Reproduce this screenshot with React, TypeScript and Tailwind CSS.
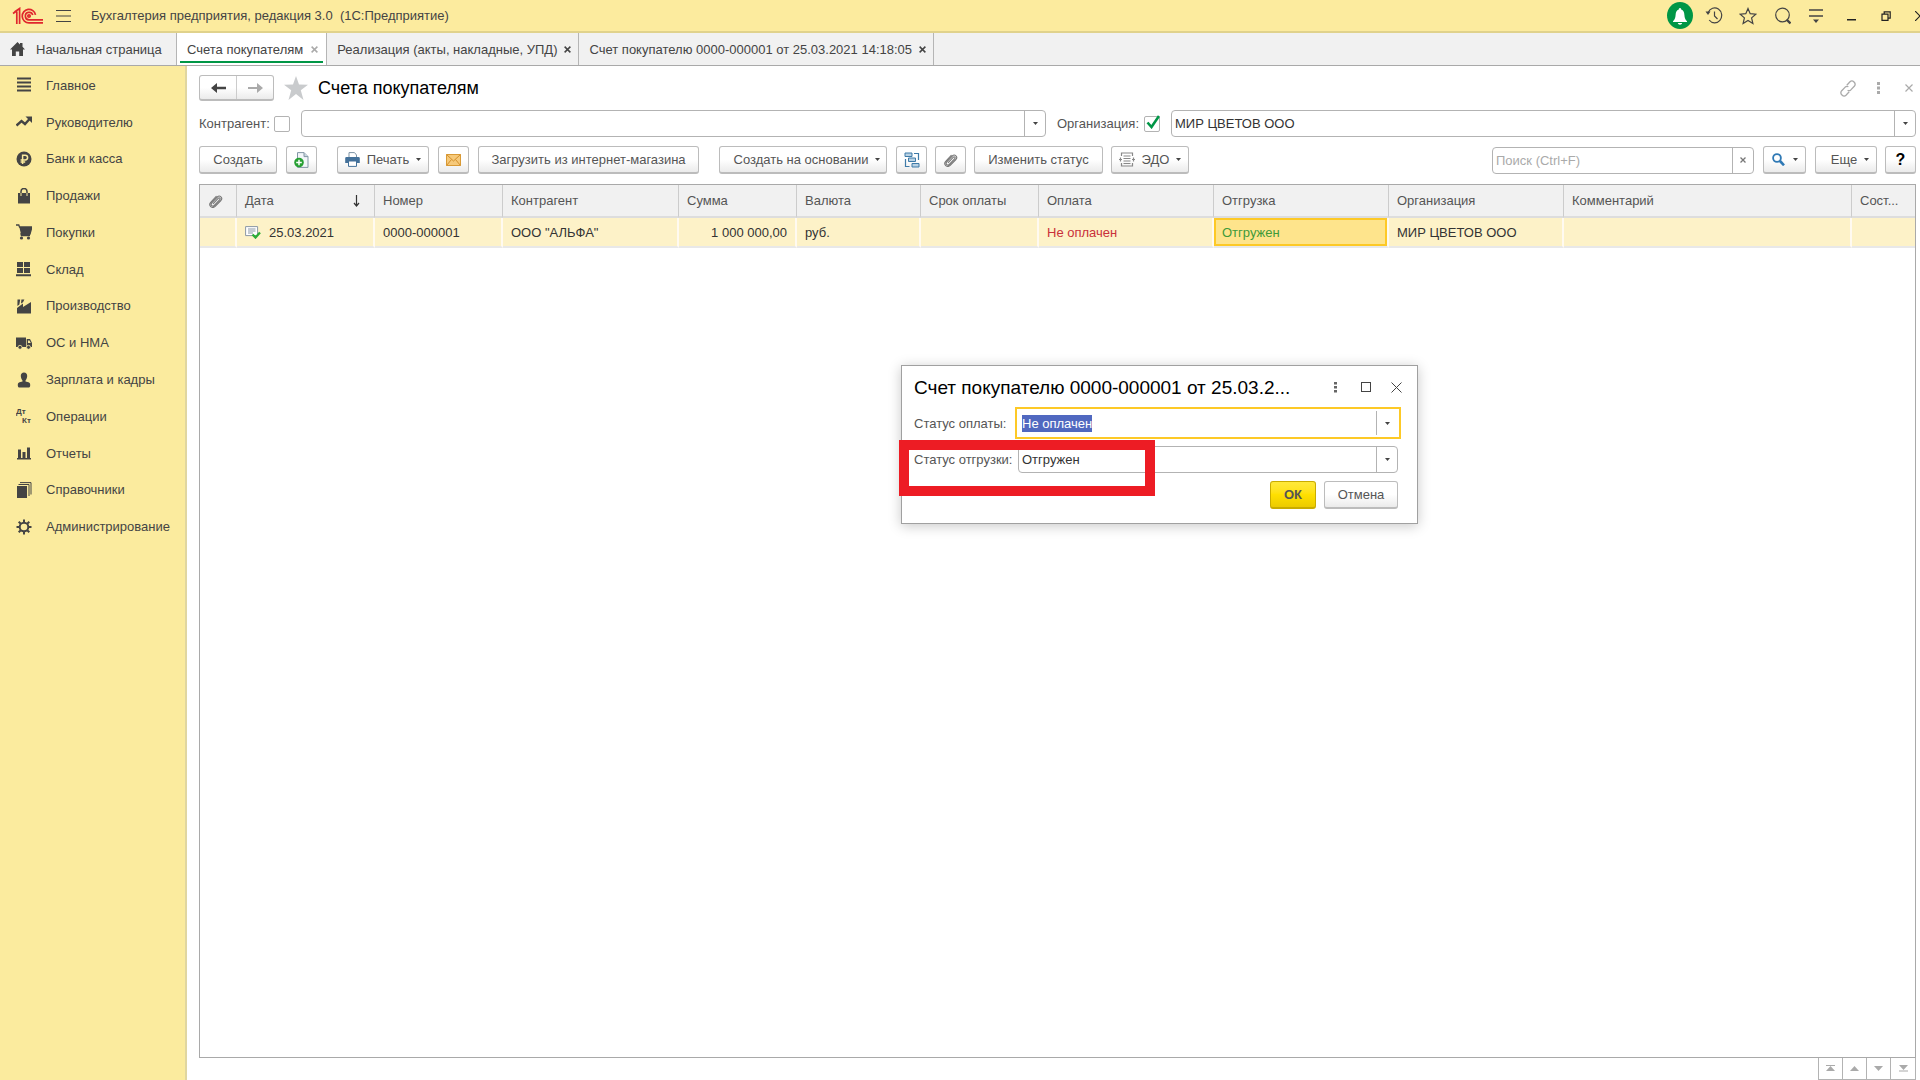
import React from 'react';
import clsx from 'clsx';

const iconClass = 'h-4 w-4 shrink-0';

const sections = [
  {
    label: 'Главное',
    icon: <path d="M1 1.500h14M1 5.500h14M1 9.500h14M1 13.500h14" stroke="currentColor" strokeWidth="2" />,
  },
  {
    label: 'Руководителю',
    icon: (
      <>
        <path d="M0.5 11.5 5.5 7l3.5 3 5-5.5" fill="none" stroke="currentColor" strokeWidth="2.4" />
        <path d="M9.5 2.5H16V9z" fill="currentColor" />
      </>
    ),
  },
  {
    label: 'Банк и касса',
    icon: (
      <>
        <circle cx="8" cy="8" r="7.5" fill="currentColor" />
        <path d="M6.6 13V4.2h2.6a2.3 2.3 0 0 1 0 4.8H4.6M4.6 11h4.6" fill="none" stroke="#fbeb9e" strokeWidth="1.5" />
      </>
    ),
  },
  {
    label: 'Продажи',
    icon: (
      <>
        <path d="M2 5h12v10.5H2z" fill="currentColor" />
        <path d="M5 8V3.500a3 3 0 0 1 6 0V8" fill="none" stroke="currentColor" strokeWidth="1.5" />
        <path d="M5 5v3M11 5v3" stroke="#fbeb9e" strokeWidth="1" />
      </>
    ),
  },
  {
    label: 'Покупки',
    icon: (
      <>
        <path d="M0 1h2.800l.7 2H16l-2 7H5l.4 1.500H14" fill="none" stroke="currentColor" strokeWidth="1.300" />
        <path d="M3.300 3H16l-2 7H5z" fill="currentColor" />
        <circle cx="5.500" cy="14" r="1.600" fill="currentColor" />
        <circle cx="12.500" cy="14" r="1.600" fill="currentColor" />
      </>
    ),
  },
  {
    label: 'Склад',
    icon: <path d="M1 1h6v5H1zM8 1h6v5H8zM1 7h6v5H1zM8 7h6v5H8zM0 13.300h15v2H0z" fill="currentColor" />,
  },
  {
    label: 'Производство',
    icon: <path d="M1 15.500V10l6-4.500V9l8-5v11.500zM1.500 1.500h2.700l-.8 5-2 1.500zM5.400 1.500h3L7 4.200 5 5.500z" fill="currentColor" />,
  },
  {
    label: 'ОС и НМА',
    icon: (
      <>
        <path d="M0 2.500h10v9.500H0zM10.700 4H14l2 4v4h-5.300z" fill="currentColor" />
        <path d="M12 5.500h1.500L14.800 8H12z" fill="#fbeb9e" />
        <circle cx="4" cy="12.300" r="2" fill="currentColor" stroke="#fbeb9e" strokeWidth=".8" />
        <circle cx="12.500" cy="12.300" r="2" fill="currentColor" stroke="#fbeb9e" strokeWidth=".8" />
      </>
    ),
  },
  {
    label: 'Зарплата и кадры',
    icon: <path d="M8 .5c2 0 3.200 1.400 3.200 3.500S9.800 8.300 9.500 8.500v1l3 .8c1.300.4 1.700 1.200 1.700 2.700 0 1.600-.4 2.500-1.200 2.500H3c-.8 0-1.200-.9-1.200-2.500 0-1.500.4-2.300 1.700-2.700l3-.8v-1C6.200 8.300 4.800 6.100 4.800 4S6 .5 8 .5z" fill="currentColor" />,
  },
  {
    label: 'Операции',
    icon: (
      <g fill="currentColor" fontFamily="Liberation Sans" fontWeight="bold" fontSize="8">
        <text x="0" y="6">Дт</text>
        <text x="6" y="15">Кт</text>
      </g>
    ),
  },
  {
    label: 'Отчеты',
    icon: <path d="M1 13h14v1.500H1zM2 4.500h3V13H2zM6.500 7h3v6h-3zM11 2.500h3V13h-3z" fill="currentColor" />,
  },
  {
    label: 'Справочники',
    icon: (
      <>
        <path d="M1 4h10v12H1z" fill="currentColor" />
        <path d="M2.500 2.500H13V14M4 .6h11V12.500" fill="none" stroke="currentColor" strokeWidth="1" />
      </>
    ),
  },
  {
    label: 'Администрирование',
    icon: (
      <>
        <circle cx="8" cy="8" r="4.300" fill="none" stroke="currentColor" strokeWidth="2" />
        <path d="M8 .5v3M8 12.500v3M.5 8h3M12.500 8h3M2.700 2.700l2.100 2.100M11.200 11.200l2.100 2.100M2.700 13.300l2.100-2.100M11.200 4.800l2.100-2.100" stroke="currentColor" strokeWidth="2" />
      </>
    ),
  },
];

const tabs = [
  { label: 'Счета покупателям', active: true },
  { label: 'Реализация (акты, накладные, УПД)', active: false },
  { label: 'Счет покупателю 0000-000001 от 25.03.2021 14:18:05', active: false },
];

const columns = [
  { title: 'Дата', width: 'w-[138px]' },
  { title: 'Номер', width: 'w-32' },
  { title: 'Контрагент', width: 'w-44' },
  { title: 'Сумма', width: 'w-[118px]' },
  { title: 'Валюта', width: 'w-[124px]' },
  { title: 'Срок оплаты', width: 'w-[118px]' },
  { title: 'Оплата', width: 'w-[175px]' },
  { title: 'Отгрузка', width: 'w-[175px]' },
  { title: 'Организация', width: 'w-[175px]' },
  { title: 'Комментарий', width: '' },
  { title: 'Сост...', width: 'w-[63px]' },
];

function Caret() {
  return (
    <svg className="h-[3px] w-[5px] shrink-0" viewBox="0 0 5 3">
      <path d="M0 0h5L2.500 3z" fill="#444" />
    </svg>
  );
}

function Cross({ className }: { className?: string }) {
  return (
    <svg className={clsx('shrink-0', className)} viewBox="0 0 8 8">
      <path d="M.7.7l6.600 6.600M7.300.7.7 7.300" stroke="currentColor" strokeWidth="1.700" />
    </svg>
  );
}

function Clip() {
  return (
    <svg className="h-[14px] w-[14px]" viewBox="0 0 14 14" fill="none" stroke="#777" strokeWidth="1.100">
      <path d="M4 9.800l5.400-5.600c1-1 2.400.3 1.400 1.400L5.300 11.500c-1.700 1.700-4.300-.5-2.500-2.600L8.300 3c2.400-2.500 6 .8 3.600 3.500L6.200 12.300C3 15.300-1 11.500 1.700 8.300L7.500 2" />
    </svg>
  );
}

interface ButtonProps {
  children: React.ReactNode;
  label?: string;
  className?: string;
}

function ToolButton({ children, label, className }: ButtonProps) {
  return (
    <button
      type="button"
      aria-label={label}
      className={clsx(
        'flex h-7 shrink-0 items-center justify-center rounded-[3px] border border-b-2 border-[#bcbcbc] bg-gradient-to-b from-white from-50% to-[#ebebeb] whitespace-nowrap',
        className,
      )}
    >
      {children}
    </button>
  );
}

interface ComboProps {
  id: string;
  value: string;
  className?: string;
}

function Combo({ id, value, className }: ComboProps) {
  return (
    <div className={clsx('flex h-[27px] min-w-0 flex-1 rounded-[4px] border border-[#b3b3b3] bg-white', className)}>
      <input id={id} defaultValue={value} className="min-w-0 flex-1 px-[3px] text-[#333] outline-none" />
      <button type="button" aria-label="Выбрать" className="flex w-[21px] items-center justify-center border-l border-[#b3b3b3]">
        <Caret />
      </button>
    </div>
  );
}

function TitleBar() {
  return (
    <header className="flex h-[33px] shrink-0 items-center overflow-hidden border-b-2 border-[#e0d28c] bg-[#fceb9e]">
      <svg className="ml-3 h-[18px] w-8 shrink-0" viewBox="0 0 32 18" fill="none" stroke="#e0262d" strokeWidth="1.700">
        <path d="M1 6.500l3.500-2.500M4.800 17V4.500M7.600 17V1.500L2.500 5" />
        <path d="M23.500 7.800A6.700 6.700 0 1 0 17 15.800h14M20.800 8A3.800 3.800 0 1 0 17 12.900h14" />
        <circle cx="17" cy="9" r="1.200" />
      </svg>
      <button type="button" aria-label="Меню" className="ml-3">
        <svg className="h-[14px] w-[15px]" viewBox="0 0 15 14" stroke="#444" strokeWidth="1.200">
          <path d="M0 1.500h15M0 7h15M0 12.500h15" />
        </svg>
      </button>
      <h1 className="ml-5 whitespace-pre text-[#444]">Бухгалтерия предприятия, редакция 3.0  (1С:Предприятие)</h1>
      <div className="ml-auto flex shrink-0 items-center text-[#444]">
        <button type="button" aria-label="Оповещения" className="mr-3">
          <svg className="h-[27px] w-[26px]" viewBox="0 0 26 27">
            <ellipse cx="13" cy="13.500" rx="13" ry="13.500" fill="#009646" />
            <path d="M13 6c1 0 1.200.8 1.200 1.500 2.300.7 3 2.800 3.200 5.500.2 3 .8 4.500 2.600 6.200v.8H6v-.8C7.800 17.500 8.400 16 8.600 13c.2-2.700.9-4.800 3.200-5.500C11.800 6.800 12 6 13 6zM10.800 21h4.400c-.4 1.300-1 1.700-2.200 1.700s-1.800-.4-2.200-1.700z" fill="#fff" />
          </svg>
        </button>
        <button type="button" aria-label="История" className="mr-4">
          <svg className="h-[17px] w-[18px]" viewBox="0 0 18 17" fill="none" stroke="currentColor" strokeWidth="1.200">
            <path d="M3.200 5.500a7 7.500 0 1 1 1 7.500M9.500 4.500V9l3 3" />
            <path d="M.5 4.500h5L3 8z" fill="currentColor" stroke="none" />
          </svg>
        </button>
        <button type="button" aria-label="Избранное" className="mr-[18px]">
          <svg className="h-[18px] w-[18px]" viewBox="0 0 18 18" fill="none" stroke="currentColor" strokeWidth="1.200">
            <path d="M9 1.500l2.200 5.200 5.600.5-4.200 3.700 1.300 5.600L9 13.500l-4.900 3 1.300-5.600L1.200 7.200l5.600-.5z" />
          </svg>
        </button>
        <button type="button" aria-label="Поиск" className="mr-[18px]">
          <svg className="h-[18px] w-4" viewBox="0 0 16 18" fill="none" stroke="currentColor">
            <circle cx="7.500" cy="8" r="6.800" strokeWidth="1.200" />
            <path d="M11.500 12.500l4 4" strokeWidth="2.400" />
          </svg>
        </button>
        <button type="button" aria-label="Настройка окна" className="mr-6">
          <svg className="h-[14px] w-[14px]" viewBox="0 0 14 14" fill="none" stroke="currentColor" strokeWidth="1.300">
            <path d="M0 1h14M0 7h14" />
            <path d="M4 10.500h6L7 14z" fill="currentColor" stroke="none" />
          </svg>
        </button>
        <button type="button" aria-label="Свернуть" className="mr-[25px] pt-2">
          <svg className="h-[2px] w-[9px]" viewBox="0 0 9 2">
            <path d="M0 0h9v1.500H0z" fill="#222" />
          </svg>
        </button>
        <button type="button" aria-label="Развернуть" className="mr-6">
          <svg className="h-[10px] w-[10px]" viewBox="0 0 10 10" fill="none" stroke="#222" strokeWidth="1.200">
            <path d="M1 3.200h6V9.400H1zM3.200 3V.8h6v6.400H7.200" />
          </svg>
        </button>
        <button type="button" aria-label="Закрыть" className="-mr-[5px]">
          <svg className="h-[10px] w-[10px]" viewBox="0 0 10 10" stroke="#222" strokeWidth="1.200">
            <path d="M0 0l10 10M10 0 0 10" />
          </svg>
        </button>
      </div>
    </header>
  );
}

function Tabs() {
  return (
    <nav className="flex h-[33px] shrink-0 border-b border-[#a9a9a9] bg-[#f1f1f1] text-[#444]">
      <a href="#home" className="flex w-[177px] items-center border-r border-[#b5b5b5] pl-[10px]">
        <svg className="mr-[11px] h-[14px] w-[15px] shrink-0" viewBox="0 0 15 14">
          <path d="M7.500 0l2.500 2.400V1h2.500v3.800L15 7.500h-2V14H9.200V9.500H5.800V14H2V7.500H0z" fill="#444" />
        </svg>
        Начальная страница
      </a>
      {tabs.map(tab => (
        <div
          key={tab.label}
          className={clsx(
            'relative flex items-center border-r border-[#b5b5b5] pl-[10px]',
            tab.active ? 'gap-2 bg-white pr-2' : 'gap-[7px] pr-[7px]',
          )}
        >
          <a href="#tab" className="whitespace-nowrap">{tab.label}</a>
          <button type="button" aria-label="Закрыть вкладку">
            <Cross className={clsx('h-[7px] w-[7px]', tab.active ? 'text-[#aaa]' : 'text-[#444]')} />
          </button>
          {tab.active && <span className="absolute inset-x-[3px] bottom-[2px] h-[2px] bg-[#009646]" />}
        </div>
      ))}
    </nav>
  );
}

function Sidebar() {
  return (
    <aside className="w-[187px] shrink-0 border-r-2 border-[#e0d6a0] bg-[#fbeb9e]">
      <ul className="mt-px grid h-[478px] auto-rows-fr">
        {sections.map(section => (
          <li key={section.label}>
            <a href="#section" className="flex h-full items-center gap-[14px] pl-4 whitespace-nowrap text-[#444]">
              <svg className={iconClass} viewBox="0 0 16 16">{section.icon}</svg>
              {section.label}
            </a>
          </li>
        ))}
      </ul>
    </aside>
  );
}

function PageHeader() {
  return (
    <div className="flex h-[26px] items-center">
      <div className="flex h-[26px] w-[75px] rounded-[3px] border border-b-2 border-[#bcbcbc] bg-gradient-to-b from-white from-50% to-[#ebebeb]">
        <button type="button" aria-label="Назад" className="flex flex-1 items-center justify-center border-r border-[#ccc]">
          <svg className="h-[10px] w-[15px]" viewBox="0 0 15 10">
            <path d="M0 5l6-5v3.700h9v2.600H6V10z" fill="#444" />
          </svg>
        </button>
        <button type="button" aria-label="Вперед" className="flex flex-1 items-center justify-center">
          <svg className="h-[10px] w-[15px]" viewBox="0 0 15 10">
            <path d="M15 5L9 0v4H0v2h9v4z" fill="#aaa" />
          </svg>
        </button>
      </div>
      <button type="button" aria-label="Добавить в избранное" className="ml-[10px]">
        <svg className="h-6 w-6" viewBox="0 0 24 24">
          <path d="M12 0l3 8.500 9 .2-7.200 5.600L19.500 24 12 18l-7.500 6 2.700-9.700L0 8.700l9-.2z" fill="#c9cbcd" />
        </svg>
      </button>
      <h2 className="ml-[10px] text-lg text-black">Счета покупателям</h2>
      <div className="ml-auto flex items-center pr-[3px] text-[#aaa]">
        <button type="button" aria-label="Ссылка" className="mr-[21px]">
          <svg className="h-[17px] w-4" viewBox="0 0 16 17" fill="none" stroke="currentColor" strokeWidth="1.300">
            <path d="M6.800 5.200l3.200-3.400c2.500-2.500 6.800 1.500 4.300 4.500l-3.500 3.600c-1 .9-2.200 1-3.200.3" />
            <path d="M9.200 11.800L6 15.200c-2.500 2.500-6.800-1.500-4.300-4.500l3.500-3.600c1-.9 2.200-1 3.200-.3" />
          </svg>
        </button>
        <button type="button" aria-label="Действия" className="mr-[25px]">
          <svg className="h-3 w-[3px]" viewBox="0 0 3 12" fill="currentColor">
            <path d="M0 0h3v3H0zM0 4.500h3v3H0zM0 9h3v3H0z" />
          </svg>
        </button>
        <button type="button" aria-label="Закрыть">
          <svg className="h-2 w-2" viewBox="0 0 8 8" stroke="currentColor" strokeWidth="1.200">
            <path d="M.5.5l7 7M7.500.5l-7 7" />
          </svg>
        </button>
      </div>
    </div>
  );
}

function Filters() {
  return (
    <div className="mt-[9px] flex items-center">
      <label htmlFor="partner" className="mr-[7px] w-17 whitespace-nowrap">Контрагент:</label>
      <input type="checkbox" aria-label="Отбор по контрагенту" className="mr-[11px] h-4 w-4 appearance-none rounded-[2px] border border-[#b3b3b3]" />
      <Combo id="partner" value="" />
      <label htmlFor="company" className="mr-[7px] ml-[11px] w-20 whitespace-nowrap">Организация:</label>
      <span className="relative mr-[11px] h-4 w-4">
        <input
          type="checkbox"
          defaultChecked
          aria-label="Отбор по организации"
          className="block h-4 w-4 appearance-none rounded-[2px] border border-[#b3b3b3]"
        />
        <svg className="pointer-events-none absolute top-[-1px] left-[2px] h-[14px] w-[14px]" viewBox="0 0 14 14">
          <path d="M1.500 7.500l4 4.500L13 1" fill="none" stroke="#009646" strokeWidth="2.600" />
        </svg>
      </span>
      <Combo id="company" value="МИР ЦВЕТОВ ООО" />
    </div>
  );
}

function Toolbar() {
  return (
    <div className="mt-[9px] flex items-center">
      <ToolButton className="w-[78px]">Создать</ToolButton>
      <ToolButton label="Создать копированием" className="ml-[9px] w-[31px]">
        <svg className="h-4 w-4" viewBox="0 0 16 16">
          <path d="M3.500.6H10l4 4v10.800H3.500z" fill="#f2f6f9" stroke="#8296a5" />
          <path d="M10 .6v4h4" fill="#c9d5de" stroke="#8296a5" />
          <circle cx="5" cy="10.500" r="4.800" fill="#27a033" />
          <path d="M5 7.700v5.600M2.200 10.500h5.600" stroke="#fff" strokeWidth="1.500" />
        </svg>
      </ToolButton>
      <ToolButton className="ml-5 w-23 gap-[7px]">
        <svg className="h-[15px] w-[15px]" viewBox="0 0 15 15">
          <path d="M4 5V.6h5.500L11.500 3v2" fill="#fff" stroke="#7d93a5" />
          <path d="M1.500 5h12a1.300 1.300 0 0 1 1.300 1.300V11H.2V6.300A1.300 1.300 0 0 1 1.500 5z" fill="#44719a" />
          <path d="M3.500 9h8v5.400h-8z" fill="#fff" stroke="#44719a" />
        </svg>
        <span>Печать</span>
        <Caret />
      </ToolButton>
      <ToolButton label="Отправить по почте" className="ml-[9px] w-[31px]">
        <svg className="h-3 w-[15px]" viewBox="0 0 15 12">
          <path d="M.5.5h14v11H.5z" fill="#f6c97a" stroke="#d99a35" />
          <path d="M.5.5l7 6.500 7-6.500M.5 11.500l5-6M14.500 11.500l-5-6" fill="none" stroke="#d28f2c" />
        </svg>
      </ToolButton>
      <ToolButton className="ml-[9px] w-[221px]">Загрузить из интернет-магазина</ToolButton>
      <ToolButton className="ml-5 w-[168px] gap-[7px] pl-2">
        Создать на основании
        <Caret />
      </ToolButton>
      <ToolButton label="Структура подчиненности" className="ml-[9px] w-[31px]">
        <svg className="h-4 w-4" viewBox="0 0 16 16" fill="#b9d2e4" stroke="#3f7ba8">
          <path d="M1 1h7v3.500H1zM4.500 6h7v3.500h-7zM8 11.500h7V15H8z" />
          <path d="M1.500 7v7.500h4M10 1.500h4.500V8" fill="none" strokeWidth="1.200" />
        </svg>
      </ToolButton>
      <ToolButton label="Присоединенные файлы" className="ml-2 w-[31px]"><Clip /></ToolButton>
      <ToolButton className="ml-2 w-[129px]">Изменить статус</ToolButton>
      <ToolButton className="ml-2 w-[78px] gap-[7px]">
        <svg className="h-[15px] w-4" viewBox="0 0 16 15" fill="none" stroke="#888" strokeWidth="1.200">
          <path d="M2.500 4V1h11v3M2.500 11v3h11v-3M4.500 4h7M4.500 6.500h7M4.500 9h7M4.500 11.500h7" />
          <path d="M0 7.500h3M13 7.500h3M1.500 5.500v4M14.500 5.500v4" />
        </svg>
        <span>ЭДО</span>
        <Caret />
      </ToolButton>
      <div className="ml-auto flex h-[27px] w-[262px] rounded-[4px] border border-[#b3b3b3]">
        <input aria-label="Поиск" placeholder="Поиск (Ctrl+F)" className="min-w-0 flex-1 px-[3px] outline-none placeholder:text-[#aaa]" />
        <button type="button" aria-label="Очистить" className="flex w-[21px] items-center justify-center border-l border-[#b3b3b3]">
          <Cross className="h-[6px] w-[6px] text-[#777]" />
        </button>
      </div>
      <ToolButton label="Найти" className="ml-[9px] w-[43px] gap-2">
        <svg className="h-[13px] w-[13px]" viewBox="0 0 13 13" fill="none" stroke="#2f79b5">
          <circle cx="5" cy="5" r="3.900" strokeWidth="1.800" />
          <path d="M8 8l4 4.300" strokeWidth="2.600" />
        </svg>
        <Caret />
      </ToolButton>
      <ToolButton className="ml-[9px] w-[62px] gap-[7px] pl-2">
        Еще
        <Caret />
      </ToolButton>
      <ToolButton label="Справка" className="ml-2 w-[31px] text-base font-bold text-black">?</ToolButton>
    </div>
  );
}

function InvoiceTable() {
  const cell = 'border-r-2 border-[#fffaf0] px-2 font-normal';
  return (
    <div className="mt-[10px] min-h-0 flex-1 border border-[#a9a9a9]">
      <table className="w-full table-fixed border-separate border-spacing-0 text-left whitespace-nowrap">
        <thead>
          <tr className="h-[33px] bg-[#f1f1f1] text-[#555]">
            <th className="w-[37px] border-r border-b-2 border-r-[#ccc] border-b-[#ddd] pl-[9px]"><Clip /></th>
            {columns.map(column => (
              <th key={column.title} className={clsx('border-r border-b-2 border-r-[#ccc] border-b-[#ddd] px-2 font-normal last:border-r-0', column.width)}>
                <span className="flex items-center justify-between">
                  {column.title}
                  {column.title === 'Дата' && (
                    <svg className="mr-[6px] h-3 w-[7px]" viewBox="0 0 7 12" fill="none" stroke="#333" strokeWidth="1.200">
                      <path d="M3.500 0v11M1 8l2.500 3L6 8" />
                    </svg>
                  )}
                </span>
              </th>
            ))}
          </tr>
        </thead>
        <tbody>
          <tr className="h-[30px] bg-[#fdf2c8] text-[#333] *:border-b-2 *:border-b-[#e8e8e8]">
            <td className={cell} />
            <td className={cell}>
              <span className="flex items-center gap-2">
                <svg className="h-[14px] w-4" viewBox="0 0 16 14">
                  <path d="M.6 1.600h12v9H.6z" fill="#fff" stroke="#8a97a5" />
                  <path d="M3 4h7.500M3 6h7.500M3 8h5" stroke="#8a97a5" />
                  <path d="M7.500 9.500l3 3L15 7.500" fill="none" stroke="#2bad36" strokeWidth="2.300" />
                </svg>
                25.03.2021
              </span>
            </td>
            <td className={cell}>0000-000001</td>
            <td className={cell}>ООО "АЛЬФА"</td>
            <td className={clsx(cell, 'text-right')}>1 000 000,00</td>
            <td className={cell}>руб.</td>
            <td className={cell} />
            <td className={clsx(cell, 'text-[#c9303a]')}>Не оплачен</td>
            <td className={clsx(cell, 'bg-[#fee48c] text-[#3f9a3a] shadow-[inset_0_0_0_2px_#fdc926]')}>Отгружен</td>
            <td className={cell}>МИР ЦВЕТОВ ООО</td>
            <td className={cell} />
            <td />
          </tr>
        </tbody>
      </table>
    </div>
  );
}

const pagerIcons = [
  { label: 'В начало', path: 'M0 0h9v1H0zM4.500 1L9 6H0z' },
  { label: 'Вверх', path: 'M4.500 1L9 6H0z' },
  { label: 'Вниз', path: 'M0 1h9L4.500 6z' },
  { label: 'В конец', path: 'M0 0h9L4.500 5zM0 5.500h9v1H0z' },
];

function Pager() {
  return (
    <div className="flex shrink-0 justify-end">
      <div className="flex h-[22px] divide-x divide-[#b3b3b3] border border-t-0 border-[#b3b3b3]">
        {pagerIcons.map(item => (
          <button key={item.label} type="button" aria-label={item.label} className="flex w-6 items-center justify-center">
            <svg className="h-[7px] w-[9px]" viewBox="0 0 9 7">
              <path d={item.path} fill="#aaa" />
            </svg>
          </button>
        ))}
      </div>
    </div>
  );
}

function StatusDialog() {
  return (
    <div
      role="dialog"
      aria-labelledby="dialog-title"
      className="absolute top-[365px] left-[901px] w-[517px] border border-[#a0a0a0] bg-white px-3 pt-[7px] pb-[14px] shadow-[0_2px_12px_rgba(0,0,0,0.22)]"
    >
      <div className="flex h-7 items-center">
        <h3 id="dialog-title" className="text-[19px] whitespace-nowrap text-black">Счет покупателю 0000-000001 от 25.03.2...</h3>
        <div className="ml-auto flex items-center pr-[3px] text-[#444]">
          <button type="button" aria-label="Действия" className="mr-6">
            <svg className="h-[11px] w-[3px]" viewBox="0 0 3 11" fill="#666">
              <path d="M0 0h3v2.500H0zM0 4h3v2.500H0zM0 8h3v2.500H0z" />
            </svg>
          </button>
          <button type="button" aria-label="Развернуть" className="mr-5 h-[10px] w-[10px] border border-[#444]" />
          <button type="button" aria-label="Закрыть">
            <svg className="h-[11px] w-[11px]" viewBox="0 0 11 11" stroke="#444">
              <path d="M.5.5l10 10M10.500.5l-10 10" />
            </svg>
          </button>
        </div>
      </div>
      <div className="mt-[6px] flex items-center pr-1">
        <label htmlFor="payment" className="w-[101px]">Статус оплаты:</label>
        <div className="flex h-8 flex-1 items-center border-2 border-[#fdc926] pr-[2px]">
          <input
            id="payment"
            defaultValue="Не оплачен"
            autoFocus
            onFocus={e => e.target.select()}
            className="min-w-0 flex-1 px-[5px] outline-none selection:bg-[#5068c0] selection:text-white"
          />
          <button type="button" aria-label="Выбрать" className="flex h-6 w-[21px] items-center justify-center border-l border-[#b3b3b3]">
            <Caret />
          </button>
        </div>
      </div>
      <div className="mt-[7px] flex items-center pr-[7px]">
        <label htmlFor="shipment" className="w-[104px]">Статус отгрузки:</label>
        <Combo id="shipment" value="Отгружен" />
      </div>
      <div className="mt-2 flex justify-end gap-2 pr-[7px]">
        <button type="button" className="h-7 w-[46px] rounded-[3px] border border-b-2 border-[#c9ac00] bg-gradient-to-b from-[#ffe93a] via-[#ffe000] to-[#eccb00] font-bold">
          ОК
        </button>
        <ToolButton className="w-[74px]">Отмена</ToolButton>
      </div>
    </div>
  );
}

export default function App() {
  return (
    <div className="relative flex h-screen flex-col overflow-hidden bg-white font-['Liberation_Sans',Arial,sans-serif] text-[13px] leading-[17px] text-[#555]">
      <TitleBar />
      <Tabs />
      <div className="flex min-h-0 flex-1">
        <Sidebar />
        <main className="flex min-w-0 flex-1 flex-col pt-[9px] pr-1 pl-3">
          <PageHeader />
          <Filters />
          <Toolbar />
          <InvoiceTable />
          <Pager />
        </main>
      </div>
      <StatusDialog />
      <div className="pointer-events-none absolute top-[440px] left-[899px] h-14 w-64 border-10 border-[#ed1c24]" />
    </div>
  );
}
